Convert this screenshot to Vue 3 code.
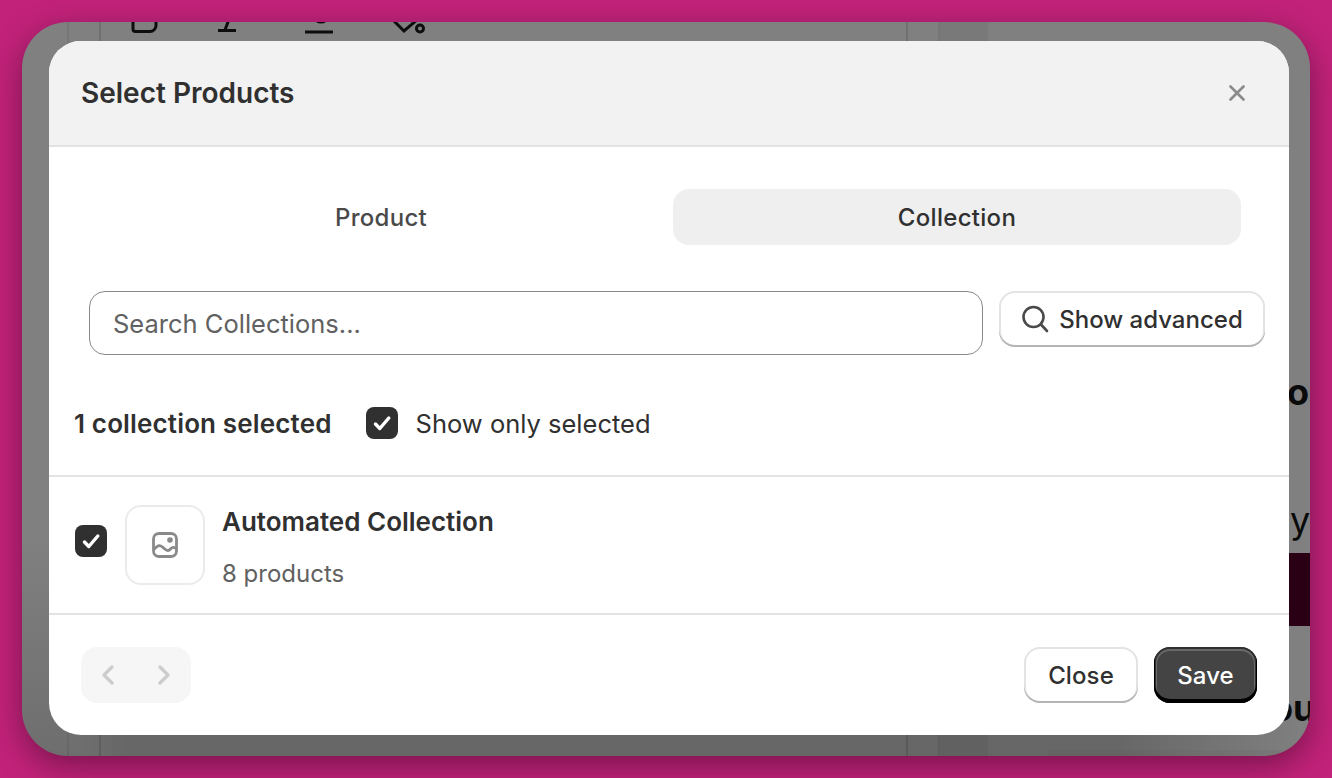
<template>
    <div class="page">
        <div class="frame">
            <div class="backdrop">
                <span class="rule rule-a"></span>
                <span class="rule rule-b"></span>
                <span class="rule rule-c"></span>
                <span class="rule rule-d"></span>
                <span class="band"></span>
                <span class="shade-left"></span>
                <span class="shade-bottom"></span>
                <span class="strip"></span>
                <span class="dark-box"></span>
                <span class="peek peek-o">o</span>
                <span class="peek peek-y">y</span>
                <span class="peek peek-ou">ou</span>
                <svg class="toolbar" width="320" height="14" viewBox="0 0 320 14" fill="none" stroke="#0d0d0d" stroke-width="3">
                    <path d="M12 -6V7a2.500 2.500 0 0 0 2.500 2.500H29a6 6 0 0 0 6 -6V-4" />
                    <path d="M97 8.500H115M110 -8L104 8" />
                    <path d="M184 10H212M193 -6a7 6 0 0 0 14 0" />
                    <path d="M268 -6L283 9L297 -3" />
                    <circle cx="299" cy="6.500" r="3.500" />
                </svg>
            </div>

            <div class="modal">
                <div class="modal-header">
                    <h2>Select Products</h2>
                    <svg class="close-icon" width="16" height="16" viewBox="0 0 16 16" fill="none" stroke="#8a8a8a" stroke-width="2.600" stroke-linecap="round">
                        <path d="M1.500 1.500L14.500 14.500M14.500 1.500L1.500 14.500" />
                    </svg>
                </div>

                <div class="tabs">
                    <button
                        v-for="tab in tabs"
                        :key="tab"
                        class="tab"
                        :class="{ active: tab === activeTab }"
                        @click="activeTab = tab"
                    >
                        {{ tab }}
                    </button>
                </div>

                <div class="search-row">
                    <input class="search-input" type="text" placeholder="Search Collections..." />
                    <button class="btn btn-advanced">
                        <svg width="28" height="28" viewBox="0 0 28 28" fill="none" stroke="#4a4a4a" stroke-width="2.600" stroke-linecap="round">
                            <circle cx="12.500" cy="12" r="10" />
                            <path d="M20 19.500L26 26" />
                        </svg>
                        Show advanced
                    </button>
                </div>

                <div class="selection-row">
                    <span class="selected-count">1 collection selected</span>
                    <label class="only-selected">
                        <span class="checkbox">
                            <svg width="32" height="32" viewBox="0 0 32 32" fill="none" stroke="#fff" stroke-width="3.400" stroke-linecap="round" stroke-linejoin="round">
                                <path d="M9.500 17L13.800 21.500L22.800 11" />
                            </svg>
                        </span>
                        Show only selected
                    </label>
                </div>

                <div class="collection">
                    <span class="checkbox item-check">
                        <svg width="32" height="32" viewBox="0 0 32 32" fill="none" stroke="#fff" stroke-width="3.400" stroke-linecap="round" stroke-linejoin="round">
                            <path d="M9.500 17L13.800 21.500L22.800 11" />
                        </svg>
                    </span>
                    <div class="thumb">
                        <svg width="26" height="26" viewBox="0 0 26 26" fill="none" stroke="#8a8a8a" stroke-width="2.800">
                            <rect x="1.500" y="1.500" width="23" height="23" rx="5.500" />
                            <path d="M2 17.500C5 13.500 7.500 12.500 10.500 15C13.500 18 16 20 18.500 17C20.500 14.500 22.500 15 24.500 17" />
                            <circle cx="18" cy="8" r="2.800" fill="#8a8a8a" stroke="none" />
                        </svg>
                    </div>
                    <div class="collection-text">
                        <div class="collection-title">Automated Collection</div>
                        <div class="collection-sub">8 products</div>
                    </div>
                </div>

                <div class="modal-footer">
                    <div class="pager">
                        <svg width="12" height="20" viewBox="0 0 12 20" fill="none" stroke="#cccccc" stroke-width="3.200" stroke-linecap="round" stroke-linejoin="round">
                            <path d="M10 2L2 10L10 18" />
                        </svg>
                        <svg width="12" height="20" viewBox="0 0 12 20" fill="none" stroke="#cccccc" stroke-width="3.200" stroke-linecap="round" stroke-linejoin="round">
                            <path d="M2 2L10 10L2 18" />
                        </svg>
                    </div>
                    <div class="actions">
                        <button class="btn btn-close">Close</button>
                        <button class="btn btn-save">Save</button>
                    </div>
                </div>
            </div>
        </div>
    </div>
</template>

<script setup>
import { ref } from 'vue';

const tabs = ['Product', 'Collection'];
const activeTab = ref('Collection');
</script>

<style scoped>
.page {
    width: 1332px;
    height: 778px;
    padding: 22px;
    box-sizing: border-box;
    background: #c2227a;
    font-family: Inter, "Liberation Sans", sans-serif;
    color: #303030;
}

.frame {
    position: relative;
    width: 1288px;
    height: 734px;
    padding: 19px 21px 21px 27px;
    box-sizing: border-box;
    border-radius: 46px;
    overflow: hidden;
    background: #808080;
    box-shadow: 0 10px 32px rgba(0, 0, 0, 0.38);
}

.backdrop {
    position: absolute;
    inset: 0;
}

.backdrop span {
    position: absolute;
}

.rule {
    top: 0;
    bottom: 0;
    width: 2px;
    background: rgba(0, 0, 0, 0.07);
}

.rule-a { left: 45px; }
.rule-b { left: 77px; background: rgba(0, 0, 0, 0.12); }
.rule-c { left: 884px; background: rgba(0, 0, 0, 0.12); }
.rule-d { left: 916px; background: rgba(0, 0, 0, 0.08); }

.band {
    left: 918px;
    width: 48px;
    top: 0;
    bottom: 0;
    background: rgba(0, 0, 0, 0.05);
}

.shade-left {
    left: 0;
    width: 60px;
    bottom: 0;
    height: 220px;
    background: linear-gradient(to bottom, rgba(0, 0, 0, 0), rgba(0, 0, 0, 0.14));
}

.shade-bottom {
    left: 60px;
    right: 0;
    bottom: 0;
    height: 52px;
    background: linear-gradient(to right, rgba(0, 0, 0, 0.14), rgba(0, 0, 0, 0.2) 4%, rgba(0, 0, 0, 0.2) 84%, rgba(0, 0, 0, 0) 100%);
}

.strip {
    left: 1026px;
    right: 0;
    bottom: 0;
    height: 6px;
    background: rgba(90, 60, 70, 0.08);
}

.dark-box {
    right: 0;
    top: 531px;
    width: 40px;
    height: 73px;
    background: #2a0015;
}

.peek {
    color: #0a0a0a;
    font-size: 36px;
    line-height: 44px;
}

.peek-o { left: 1265px; top: 348px; font-weight: 700; }
.peek-y { left: 1268px; top: 476px; font-weight: 400; }
.peek-ou { left: 1249px; top: 664px; font-weight: 700; }

.toolbar {
    position: absolute;
    left: 99px;
    top: 0;
}

.modal {
    position: relative;
    height: 694px;
    border-radius: 32px;
    overflow: hidden;
    background: #fff;
}

.modal-header {
    height: 104px;
    padding: 0 44px 0 32px;
    display: flex;
    align-items: center;
    justify-content: space-between;
    background: #f2f2f2;
    border-bottom: 2px solid #e3e3e3;
}

h2 {
    margin: 0;
    font-size: 28px;
    font-weight: 600;
    line-height: 34px;
}

.tabs {
    display: grid;
    grid-template-columns: 1fr 1fr;
    gap: 8px;
    padding: 42px 48px 0;
}

.tab {
    height: 56px;
    border: none;
    border-radius: 16px;
    background: transparent;
    font: 450 24px Inter, "Liberation Sans", sans-serif;
    letter-spacing: 0.3px;
    color: #4a4a4a;
    cursor: pointer;
}

.tab.active {
    background: #efefef;
    color: #303030;
}

.search-row {
    display: flex;
    align-items: flex-start;
    gap: 16px;
    padding: 46px 24px 0 40px;
}

.search-input {
    flex: 1;
    min-width: 0;
    height: 64px;
    padding: 0 23px;
    box-sizing: border-box;
    border: 1.500px solid #8a8a8a;
    border-radius: 16px;
    outline: none;
    font: 400 25.500px Inter, "Liberation Sans", sans-serif;
    color: #303030;
}

.search-input::placeholder {
    color: #616161;
    opacity: 1;
}

.btn {
    height: 56px;
    border: none;
    border-radius: 16px;
    background: #fff;
    font: 450 24px Inter, "Liberation Sans", sans-serif;
    letter-spacing: 0.1px;
    color: #303030;
    cursor: pointer;
    box-shadow: inset 0 -2px 0 0 #b5b5b5, inset 0 0 0 2px #e3e3e3;
}

.btn-advanced {
    width: 266px;
    display: flex;
    align-items: center;
    justify-content: center;
    gap: 10px;
    flex: none;
    letter-spacing: 0;
}

.selection-row {
    display: flex;
    align-items: center;
    gap: 34px;
    height: 32px;
    padding: 52px 0 36px 25px;
    border-bottom: 2px solid #e3e3e3;
}

.selected-count {
    font-size: 26px;
    font-weight: 600;
    letter-spacing: 0.15px;
}

.only-selected {
    display: flex;
    align-items: center;
    gap: 18px;
    font-size: 25.500px;
    font-weight: 400;
}

.checkbox {
    display: block;
    width: 32px;
    height: 32px;
    flex: none;
    border-radius: 8px;
    background: #303030;
}

.checkbox svg {
    display: block;
}

.collection {
    display: flex;
    align-items: flex-start;
    height: 80px;
    padding: 28px 26px;
    border-bottom: 2px solid #e3e3e3;
}

.item-check {
    margin-top: 20px;
}

.thumb {
    width: 80px;
    height: 80px;
    margin: 0 17px 0 18px;
    box-sizing: border-box;
    flex: none;
    display: flex;
    align-items: center;
    justify-content: center;
    border: 2px solid #ebebeb;
    border-radius: 16px;
}

.collection-text {
    display: flex;
    flex-direction: column;
    gap: 20px;
}

.collection-title {
    font-size: 26px;
    font-weight: 600;
    line-height: 32px;
    margin-top: 1px;
}

.collection-sub {
    font-size: 24px;
    line-height: 32px;
    color: #616161;
}

.modal-footer {
    display: flex;
    align-items: center;
    justify-content: space-between;
    padding: 32px;
}

.pager {
    width: 110px;
    height: 56px;
    padding: 0 21px;
    box-sizing: border-box;
    display: flex;
    align-items: center;
    justify-content: space-between;
    border-radius: 16px;
    background: #f6f6f6;
}

.actions {
    display: flex;
    gap: 16px;
}

.btn-close {
    width: 114px;
}

.btn-save {
    width: 103px;
    background: #444;
    color: #fff;
    box-shadow: inset 0 -3px 0 1px #000, inset 0 0 0 2px #303030, inset 0 1px 0 3px rgba(255, 255, 255, 0.2);
}
</style>
